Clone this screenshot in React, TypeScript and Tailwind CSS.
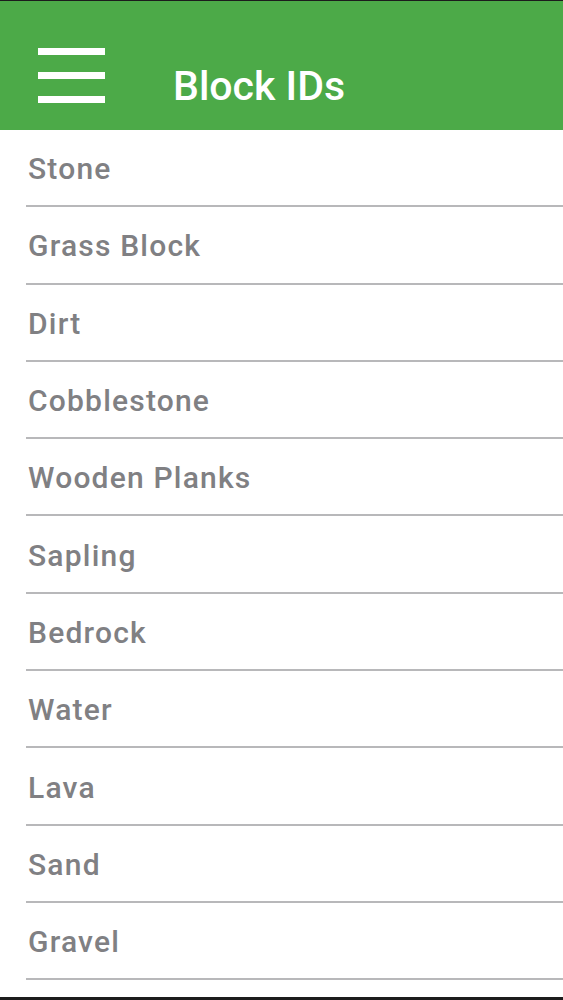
const BLOCKS = [
  'Stone',
  'Grass Block',
  'Dirt',
  'Cobblestone',
  'Wooden Planks',
  'Sapling',
  'Bedrock',
  'Water',
  'Lava',
  'Sand',
  'Gravel',
]

export default function App() {
  return (
    <div className="flex h-[1000px] w-[563px] flex-col overflow-hidden border-t border-b-[3px] border-[#1c1c1c] bg-white" style={{ fontFamily: 'Roboto, "Liberation Sans", Arial, sans-serif' }}>
      <header className="flex h-[129px] shrink-0 items-center bg-[#4caa48] pt-[20px]">
        <button type="button" aria-label="Menu" className="ml-[38px] flex h-[55px] w-[67px] flex-col justify-between">
          <span className="block h-[7px] w-full bg-white" />
          <span className="block h-[7px] w-full bg-white" />
          <span className="block h-[7px] w-full bg-white" />
        </button>
        <h1 className="ml-[68px] mt-[22px] text-[41px] font-medium leading-none text-white">
          Block IDs
        </h1>
      </header>
      <ul className="flex-1">
        {BLOCKS.map((b) => (
          <li key={b} className="ml-[26px] flex h-[77.3px] items-center border-b-2 border-[#b8b8ba] pl-[2px] pt-[2px]">
            <span className="text-[30px] font-medium tracking-[0.04em] text-[#808083]">{b}</span>
          </li>
        ))}
      </ul>
    </div>
  )
}
